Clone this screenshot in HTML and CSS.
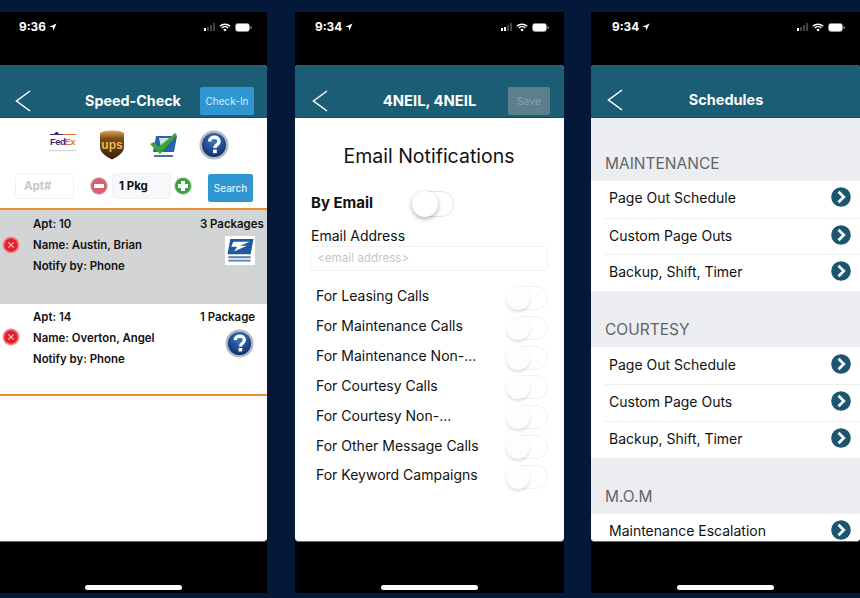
FILE: index.html
```html
<!DOCTYPE html>
<html lang="en">
<head>
<meta charset="utf-8">
<title>Speed-Check, Email Notifications, Schedules</title>
<link rel="stylesheet" href="styles.css">
</head>
<body>
<svg class="defs" aria-hidden="true">
  <defs>
    <radialGradient id="qfill" cx="50%" cy="30%" r="75%">
      <stop offset="0" stop-color="#3f78c4"/><stop offset="1" stop-color="#0b2a66"/>
    </radialGradient>
    <linearGradient id="upsfill" x1="0" y1="0" x2="0" y2="1">
      <stop offset="0" stop-color="#e0a850"/><stop offset=".28" stop-color="#7a4d1c"/><stop offset="1" stop-color="#3c2009"/>
    </linearGradient>
  </defs>
  <symbol id="back" viewBox="0 0 16 22"><path d="M15 1 L1.5 11 L15 21" fill="none" stroke="#fff" stroke-width="1.5"/></symbol>
  <symbol id="loc" viewBox="0 0 10 10"><path d="M9.5 .5 L.5 4.6 L4.6 5.4 L5.4 9.5 Z" fill="#fff"/></symbol>
  <symbol id="wifi" viewBox="0 0 14 10">
    <path d="M1 3.6 A8.6 8.6 0 0 1 13 3.6 M3.2 5.7 A5.5 5.5 0 0 1 10.8 5.7" fill="none" stroke="#fff" stroke-width="1.6"/>
    <path d="M5 7.6 A2.8 2.8 0 0 1 9 7.6 L7 9.8 Z" fill="#fff"/>
  </symbol>
  <symbol id="batt" viewBox="0 0 17 9">
    <rect x=".5" y=".5" width="14" height="8" rx="2.4" fill="#fff" stroke="#999" stroke-width=".5"/>
    <path d="M15.5 3 a1.5 1.5 0 0 1 0 3 Z" fill="#888"/>
  </symbol>
  <symbol id="question" viewBox="0 0 30 30">
    <circle cx="15" cy="15" r="14.5" fill="#b4b8c0"/>
    <circle cx="15" cy="15" r="12" fill="url(#qfill)"/>
    <path d="M10.5 11.5 C10.8 5.8 20 6 20 11.4 C20 15 15.9 14.8 15.9 18" fill="none" stroke="#fff" stroke-width="3.4"/>
    <rect x="14" y="19.6" width="3.8" height="3.6" fill="#fff"/>
  </symbol>
  <symbol id="usps" viewBox="0 0 30 30">
    <path d="M5 3 H29 L26 19 H2 Z" fill="#1c5b9f"/>
    <path d="M8 6 H25 L15 10 L22 10 L9 16 L12 11 L6 11 Z" fill="#fff"/>
    <path d="M3 21 H26 V23 H3 Z M3 24.500 H26 V26.500 H3 Z" fill="#5e7ea8"/>
  </symbol>
  <symbol id="remove" viewBox="0 0 18 18">
    <circle cx="9" cy="9" r="8.500" fill="#f2878e"/>
    <circle cx="9" cy="9" r="6.800" fill="#e2202f"/>
    <path d="M6.300 6.300 L11.700 11.700 M11.700 6.300 L6.300 11.700" stroke="#f8c5c8" stroke-width="1.100"/>
  </symbol>
  <symbol id="go" viewBox="0 0 20 20">
    <circle cx="10" cy="10" r="9.800" fill="#1c5570"/>
    <path d="M7.500 4.800 L12.800 10 L7.500 15.200" fill="none" stroke="#fff" stroke-width="2.700"/>
  </symbol>
</svg>

<main class="deck">
  <section class="phone phone-a">
    <div class="status">
      <span class="clock">9:36 <svg class="loc"><use href="#loc"/></svg></span>
      <span class="status-icons">
        <span class="signal"><i class="on"></i><i></i><i></i><i></i></span>
        <svg class="wifi"><use href="#wifi"/></svg>
        <svg class="batt"><use href="#batt"/></svg>
      </span>
    </div>
    <div class="screen">
      <header class="nav">
        <svg class="back"><use href="#back"/></svg>
        <h1>Speed-Check</h1>
        <button class="nav-btn checkin">Check-In</button>
      </header>
      <div class="carriers">
        <span class="carrier">
          <svg class="fedex" viewBox="0 0 28 22">
            <path d="M1 3 H5 L7 1 H9 L9.500 3 H14 V4 H1 Z" fill="#3b2a7c"/>
            <path d="M14 3 H27 V4 H14 Z" fill="#e2742a"/>
            <text x="1" y="14" class="fx-a">Fed</text>
            <text x="15.500" y="14" class="fx-b">Ex</text>
            <rect x="0" y="19" width="27" height="1.200" fill="#d5d5d5"/>
          </svg>
        </span>
        <span class="carrier">
          <svg class="ups" viewBox="0 0 26 30">
            <path d="M13 .5 C18 .5 22 1.200 25 3 V17 C25 23 18 27 13 29.500 C8 27 1 23 1 17 V3 C4 1.200 8 .5 13 .5 Z" fill="url(#upsfill)"/>
            <text x="13" y="19" class="ups-t">ups</text>
          </svg>
        </span>
        <span class="carrier">
          <svg class="usps-check" viewBox="0 0 30 28">
            <path d="M7 5 H28 L25 21 H4 Z" fill="#2a63a8"/>
            <path d="M10 7 H24 L13 13 H18 L12 16 Z" fill="#cfe0ee"/>
            <path d="M1 13 L5 11 L10 16 L26 2 L28 4 L11 23 Z" fill="#39a82c"/>
            <path d="M5 24 H24 V26 H5 Z" fill="#4b75a8"/>
          </svg>
        </span>
        <span class="carrier"><svg class="q-lg"><use href="#question"/></svg></span>
      </div>
      <div class="search-row">
        <span class="field apt">Apt#</span>
        <span class="stepper minus"><i></i></span>
        <span class="field pkg">1 Pkg</span>
        <span class="stepper plus"><i></i><b></b></span>
        <button class="search">Search</button>
      </div>
      <div class="parcels">
        <article class="parcel picked">
          <svg class="remove"><use href="#remove"/></svg>
          <div class="parcel-info"><p>Apt: 10</p><p>Name: Austin, Brian</p><p>Notify by: Phone</p></div>
          <div class="parcel-side"><p>3 Packages</p><span class="usps-tile"><svg class="usps"><use href="#usps"/></svg></span></div>
        </article>
        <article class="parcel">
          <svg class="remove"><use href="#remove"/></svg>
          <div class="parcel-info"><p>Apt: 14</p><p>Name: Overton, Angel</p><p>Notify by: Phone</p></div>
          <div class="parcel-side"><p>1 Package</p><svg class="q-md"><use href="#question"/></svg></div>
        </article>
      </div>
    </div>
    <div class="home"><span></span></div>
  </section>

  <section class="phone phone-b">
    <div class="status">
      <span class="clock">9:34 <svg class="loc"><use href="#loc"/></svg></span>
      <span class="status-icons">
        <span class="signal"><i class="on"></i><i class="on"></i><i></i><i></i></span>
        <svg class="wifi"><use href="#wifi"/></svg>
        <svg class="batt"><use href="#batt"/></svg>
      </span>
    </div>
    <div class="screen">
      <header class="nav">
        <svg class="back"><use href="#back"/></svg>
        <h1>4NEIL, 4NEIL</h1>
        <button class="nav-btn save">Save</button>
      </header>
      <div class="prefs">
        <h2>Email Notifications</h2>
        <div class="by-email"><strong>By Email</strong><span class="toggle large"></span></div>
        <label class="email-label">Email Address</label>
        <span class="email-field">&lt;email address&gt;</span>
        <ul class="pref-list">
          <li>For Leasing Calls<span class="toggle"></span></li>
          <li>For Maintenance Calls<span class="toggle"></span></li>
          <li>For Maintenance Non-...<span class="toggle"></span></li>
          <li>For Courtesy Calls<span class="toggle"></span></li>
          <li>For Courtesy Non-...<span class="toggle"></span></li>
          <li>For Other Message Calls<span class="toggle"></span></li>
          <li>For Keyword Campaigns<span class="toggle"></span></li>
        </ul>
      </div>
    </div>
    <div class="home"><span></span></div>
  </section>

  <section class="phone phone-c">
    <div class="status">
      <span class="clock">9:34 <svg class="loc"><use href="#loc"/></svg></span>
      <span class="status-icons">
        <span class="signal"><i class="on"></i><i></i><i></i><i></i></span>
        <svg class="wifi"><use href="#wifi"/></svg>
        <svg class="batt"><use href="#batt"/></svg>
      </span>
    </div>
    <div class="screen grey">
      <header class="nav">
        <svg class="back"><use href="#back"/></svg>
        <h1>Schedules</h1>
        <span></span>
      </header>
      <div class="groups">
        <h3>MAINTENANCE</h3>
        <ul class="menu">
          <li>Page Out Schedule<svg class="go"><use href="#go"/></svg></li>
          <li>Custom Page Outs<svg class="go"><use href="#go"/></svg></li>
          <li>Backup, Shift, Timer<svg class="go"><use href="#go"/></svg></li>
        </ul>
        <h3>COURTESY</h3>
        <ul class="menu">
          <li>Page Out Schedule<svg class="go"><use href="#go"/></svg></li>
          <li>Custom Page Outs<svg class="go"><use href="#go"/></svg></li>
          <li>Backup, Shift, Timer<svg class="go"><use href="#go"/></svg></li>
        </ul>
        <h3>M.O.M</h3>
        <ul class="menu">
          <li>Maintenance Escalation<svg class="go"><use href="#go"/></svg></li>
        </ul>
      </div>
    </div>
    <div class="home"><span></span></div>
  </section>
</main>
</body>
</html>
```
FILE: styles.css
```css
* { box-sizing: border-box; }
html, body { margin: 0; padding: 0; height: 100%; }
body {
  background: #04183a;
  font-family: Inter, "Liberation Sans", sans-serif;
  overflow: hidden;
  color: #111;
}
p, h1, h2, h3, ul { margin: 0; padding: 0; }
ul { list-style: none; }
.defs { position: absolute; width: 0; height: 0; }

.deck { display: flex; padding-top: 12px; }
.phone { height: 581px; background: #000; display: flex; flex-direction: column; flex: none; }
.phone-a { width: 267px; }
.phone-b { width: 269px; margin-left: 28px; }
.phone-c { width: 269px; margin-left: 27px; }

.status {
  height: 53px; flex: none; display: flex; justify-content: space-between; align-items: flex-start;
  padding: 8px 15px 0 20px; color: #fff;
}
.phone-a .status { padding-left: 19px; }
.phone-c .status { padding-left: 21px; }
.clock { font-size: 11.8px; font-weight: 700; line-height: 14px; display: flex; align-items: center; gap: 3px; }
.loc { width: 8px; height: 8px; }
.status-icons { display: flex; align-items: center; gap: 4px; height: 14px; }
.signal { display: flex; align-items: flex-end; gap: 1px; height: 8px; }
.signal i { width: 2px; background: #444; }
.signal i:nth-child(1) { height: 3px; }
.signal i:nth-child(2) { height: 4px; }
.signal i:nth-child(3) { height: 6px; }
.signal i:nth-child(4) { height: 8px; }
.signal i.on { background: #fff; }
.wifi { width: 12px; height: 9px; }
.batt { width: 17px; height: 9px; }

.screen {
  height: 477px; flex: none; overflow: hidden; background: #fff;
  border-radius: 4px; display: flex; flex-direction: column;
  border-bottom: 1px solid #666;
}
.screen.grey { background: #ebedf1; }
.phone-a .screen { border-top-left-radius: 0; border-bottom-left-radius: 0; }

.nav {
  height: 53px; flex: none; background: #1b5d74; color: #fff;
  display: grid; grid-template-columns: 1fr auto 1fr; align-items: center;
  padding: 21px 14px 4px 15px; border-bottom: 1px solid #17495d;
}
.phone-a .nav { padding-right: 13px; }
.phone-b .nav { padding-left: 17px; }
.phone-c .nav { padding-left: 16px; }
.nav h1 { font-size: 14.3px; font-weight: 700; line-height: 18px; text-align: center; }
.phone-a .nav h1 { padding-right: 3px; }
.phone-b .nav h1 { font-size: 14.8px; padding-right: 3px; }
.phone-c .nav h1 { font-size: 14.5px; padding-right: 1px; }
.back { width: 16px; height: 22px; }
.nav-btn {
  justify-self: end; border: 0; border-radius: 2px; font-family: inherit; font-size: 10px; padding: 0;
  height: 28px; margin-top: 1px;
}
.checkin { width: 54px; background: #2f96d2; color: #d9eef9; }
.save { width: 42px; background: #5d7f8d; color: #85a2ad; font-size: 10.5px; }

.carriers { display: flex; justify-content: center; padding: 13px 0 0 10px; height: 55px; flex: none; }
.carrier { width: 50px; display: flex; justify-content: center; align-items: flex-start; }
.fedex { width: 28px; height: 22px; margin-right: 2px; }
.fx-a { font: 700 9.500px "Liberation Sans", sans-serif; fill: #3b2a7c; letter-spacing: -.5px; }
.fx-b { font: 700 9.500px "Liberation Sans", sans-serif; fill: #e2742a; letter-spacing: -.5px; }
.ups { width: 26px; height: 30px; margin: -1px 3px 0 0; }
.ups-t { font: 700 12px "Liberation Sans", sans-serif; fill: #eebc4c; text-anchor: middle; }
.usps-check { width: 30px; height: 28px; }
.q-lg { width: 30px; height: 30px; margin-top: -1px; }

.search-row { display: flex; align-items: flex-start; height: 35px; padding-left: 15px; flex: none; }
.field {
  display: block; width: 59px; height: 26px; border: 1px solid #f0f1f3; border-radius: 4px;
  font-size: 11.500px; font-weight: 700; line-height: 24px; padding-left: 8px;
}
.apt { color: #c6c8cc; }
.pkg { color: #111; background: #f7f8f9; padding-left: 6px; margin-left: 4px; }
.stepper { width: 18px; height: 18px; border-radius: 50%; margin-top: 4px; position: relative; border: 1px solid #d8d8d8; flex: none; }
.minus { background: #d9606c; margin-left: 16px; }
.plus { background: #3aa53a; margin-left: 3px; }
.stepper i { position: absolute; left: 3px; right: 3px; top: 6px; height: 4px; background: #fff; }
.stepper b { position: absolute; top: 3px; bottom: 3px; left: 6px; width: 4px; background: #fff; }
.search {
  width: 45px; height: 28px; border: 0; border-radius: 2px; margin-left: 16px; margin-top: 1px; padding: 0;
  background: #2f96d2; color: #e0f1fa; font-family: inherit; font-size: 10px; font-weight: 500;
}

.parcels { border-top: 2px solid #e88d2b; flex: none; }
.parcel { height: 92px; padding: 4px 0 0 0; display: flex; position: relative; }
.parcel.picked { background: #d3d4d6; height: 94px; }
.parcel + .parcel { border-bottom: 2px solid #e88d2b; height: 92px; padding-top: 3px; }
.remove { width: 18px; height: 18px; margin: 22px 0 0 2px; flex: none; }
.parcel + .parcel .remove { margin-top: 21px; }
.parcel-info { margin-left: 13px; width: 167px; flex: none; }
.parcel-info p, .parcel-side p { font-size: 11.400px; font-weight: 600; line-height: 21px; }
.parcel-side { display: flex; flex-direction: column; align-items: flex-start; white-space: nowrap; }
.usps-tile { display: block; width: 30px; height: 29px; margin: 1px 0 0 25px; background: #fff; }
.usps { display: block; width: 30px; height: 29px; }
.q-md { width: 29px; height: 29px; margin: 1px 0 0 25px; }

.prefs { padding: 0 16px 0 15px; display: flex; flex-direction: column; }
.prefs h2 { font-size: 19.500px; font-weight: 400; line-height: 24px; text-align: center; margin: 26px 0 0; color: #111; }
.by-email { display: flex; align-items: center; margin: 23px 0 0 1px; height: 26px; }
.by-email strong { font-size: 15px; font-weight: 700; width: 101px; margin-top: -4px; }
.email-label { font-size: 14px; line-height: 18px; margin: 10px 0 0 1px; }
.email-field {
  display: block; height: 25px; margin-top: 1px; border: 1px solid #f1f2f4; border-radius: 4px;
  font-size: 11.700px; line-height: 23px; padding-left: 6px; color: #c4c6ca;
}
.pref-list { margin-top: 10px; }
.pref-list li {
  height: 29.850px; display: flex; justify-content: space-between; align-items: center;
  font-size: 14px; padding-left: 6px; color: #111;
}
.toggle {
  width: 42px; height: 24px; border-radius: 13px; border: 1px solid #f0f1f3; background: #fff;
  position: relative; flex: none;
}
.pref-list .toggle { margin-top: 4px; }
.toggle::before {
  content: ""; position: absolute; left: -1px; top: -1px; width: 24px; height: 24px; border-radius: 50%;
  background: #fdfdfd; box-shadow: 0 2px 3px rgba(0, 0, 0, .13);
}
.toggle.large { height: 26px; border-color: #e3e4e6; }
.toggle.large::before { width: 26px; height: 26px; background: #fff; box-shadow: 0 2px 5px rgba(0, 0, 0, .3); }

.groups { display: flex; flex-direction: column; }
.groups h3 {
  font-size: 15.500px; font-weight: 400; color: #626468; line-height: 18px;
  padding: 20px 0 8px 14px; height: 46px; margin-top: 0;
}
.groups h3:first-child { margin-top: 17px; }
.groups h3:not(:first-child) { margin-top: 10.400px; }
.menu { background: #fff; padding-left: 14px; }
.menu li {
  height: 36.700px; display: flex; justify-content: space-between; align-items: center;
  font-size: 14px; padding: 0 9px 3px 4px; border-top: 1px solid #eceef0; color: #111;
}
.menu li:first-child { border-top: 0; }
.go { width: 20px; height: 20px; margin-top: -1px; }

.home { flex: 1; display: flex; justify-content: center; align-items: flex-end; padding-bottom: 3px; }
.home span { width: 97px; height: 5px; border-radius: 3px; background: #fff; }
```
